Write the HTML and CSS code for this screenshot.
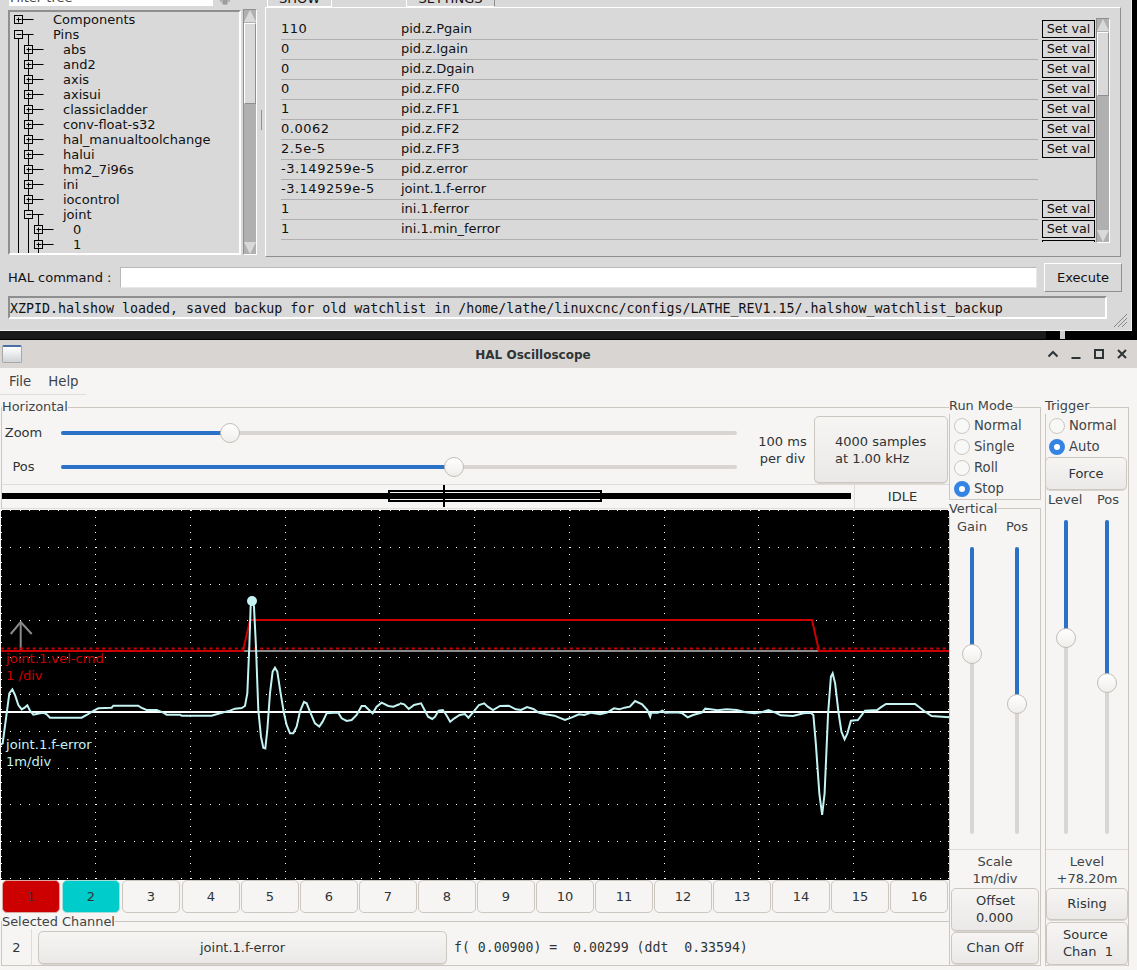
FILE: index.html
```html
<!DOCTYPE html>
<html lang="en">

<head>
    <meta charset="UTF-8">
    <title>HAL Oscilloscope</title>
    <link rel="stylesheet" href="styles.css">
</head>

<body>
    <section class="halshow">
        <div class="hs-top">
            <div class="hs-left">
                <div class="hs-filter">
                    <div class="hs-filter-entry">Filter tree</div>
                    <svg class="hs-filter-icon" width="10" height="6"><path d="M0 1h10M2 3h6M4 0v5M6 0v5" stroke="#8a8a8a" fill="none"/></svg>
                </div>
                <div class="hs-tree-wrap">
                    <div class="hs-tree">
                        <svg id="tree_lines" class="tree-lines" width="100" height="245"></svg>
                        <div class="tree-row tree-l0">Components</div>
                        <div class="tree-row tree-l0">Pins</div>
                        <div class="tree-row tree-l1">abs</div>
                        <div class="tree-row tree-l1">and2</div>
                        <div class="tree-row tree-l1">axis</div>
                        <div class="tree-row tree-l1">axisui</div>
                        <div class="tree-row tree-l1">classicladder</div>
                        <div class="tree-row tree-l1">conv-float-s32</div>
                        <div class="tree-row tree-l1">hal_manualtoolchange</div>
                        <div class="tree-row tree-l1">halui</div>
                        <div class="tree-row tree-l1">hm2_7i96s</div>
                        <div class="tree-row tree-l1">ini</div>
                        <div class="tree-row tree-l1">iocontrol</div>
                        <div class="tree-row tree-l1">joint</div>
                        <div class="tree-row tree-l2">0</div>
                        <div class="tree-row tree-l2">1</div>
                    </div>
                    <div class="tk-scroll tree-scroll">
                        <div class="tk-arrow-up"></div>
                        <div class="tk-thumb tree-thumb"></div>
                        <div class="tk-trough"></div>
                        <div class="tk-arrow-down"></div>
                    </div>
                </div>
            </div>
            <div class="hs-sash"></div>
            <div class="hs-right">
                <div class="hs-tabs">
                    <div class="hs-tab hs-tab-show">SHOW</div>
                    <div class="hs-tab hs-tab-watch"></div>
                    <div class="hs-tab hs-tab-settings">SETTINGS</div>
                </div>
                <div class="hs-panel">
                    <div class="watch-list">
                        <div class="watch-row"><span class="watch-val">110</span><span class="watch-name">pid.z.Pgain</span><button class="setval">Set val</button></div>
                        <div class="watch-row"><span class="watch-val">0</span><span class="watch-name">pid.z.Igain</span><button class="setval">Set val</button></div>
                        <div class="watch-row"><span class="watch-val">0</span><span class="watch-name">pid.z.Dgain</span><button class="setval">Set val</button></div>
                        <div class="watch-row"><span class="watch-val">0</span><span class="watch-name">pid.z.FF0</span><button class="setval">Set val</button></div>
                        <div class="watch-row"><span class="watch-val">1</span><span class="watch-name">pid.z.FF1</span><button class="setval">Set val</button></div>
                        <div class="watch-row"><span class="watch-val">0.0062</span><span class="watch-name">pid.z.FF2</span><button class="setval">Set val</button></div>
                        <div class="watch-row"><span class="watch-val">2.5e-5</span><span class="watch-name">pid.z.FF3</span><button class="setval">Set val</button></div>
                        <div class="watch-row"><span class="watch-val">-3.149259e-5</span><span class="watch-name">pid.z.error</span></div>
                        <div class="watch-row"><span class="watch-val">-3.149259e-5</span><span class="watch-name">joint.1.f-error</span></div>
                        <div class="watch-row"><span class="watch-val">1</span><span class="watch-name">ini.1.ferror</span><button class="setval">Set val</button></div>
                        <div class="watch-row"><span class="watch-val">1</span><span class="watch-name">ini.1.min_ferror</span><button class="setval">Set val</button></div>
                        <div class="watch-cut"></div>
                    </div>
                    <div class="tk-scroll watch-scroll">
                        <div class="tk-arrow-up"></div>
                        <div class="tk-thumb watch-thumb"></div>
                        <div class="tk-trough"></div>
                        <div class="tk-arrow-down"></div>
                    </div>
                </div>
            </div>
        </div>
        <div class="hs-command">
            <label class="hs-label">HAL command :</label>
            <div class="hs-entry"></div>
            <button class="hs-execute">Execute</button>
        </div>
        <div class="hs-status">XZPID.halshow loaded, saved backup for old watchlist in /home/lathe/linuxcnc/configs/LATHE_REV1.15/.halshow_watchlist_backup</div>
        <svg class="hs-grip" width="14" height="14"><path d="M1 14L14 1M5 14L14 5M9 14L14 9" stroke="#8a8a8a" fill="none"/></svg>
    </section>
    <div class="desktop-gap">
        <div class="gap-dark"></div>
        <div class="gap-mark"></div>
    </div>

    <section class="scope">
        <header class="titlebar">
            <div class="app-icon"></div>
            <div class="title-text">HAL Oscilloscope</div>
            <div class="win-buttons">
                <svg width="14" height="14" viewBox="0 0 14 14"><path d="M2.500 9.500L7 5l4.500 4.500" fill="none" stroke="#2e3436" stroke-width="2"/></svg>
                <svg width="14" height="14" viewBox="0 0 14 14"><path d="M2.500 11h9" fill="none" stroke="#2e3436" stroke-width="2"/></svg>
                <svg width="14" height="14" viewBox="0 0 14 14"><rect x="3" y="3" width="8" height="8" fill="none" stroke="#2e3436" stroke-width="2"/></svg>
                <svg width="14" height="14" viewBox="0 0 14 14"><path d="M3 3l8 8M11 3l-8 8" fill="none" stroke="#2e3436" stroke-width="2"/></svg>
            </div>
        </header>

        <nav class="menubar"><span class="menu-item">File</span><span class="menu-item">Help</span></nav>

        <div class="scope-body">
            <div class="scope-main">
                <fieldset class="gframe horizontal">
                    <legend>Horizontal</legend>
                    <div class="horiz-top">
                        <div class="horiz-sliders">
                            <div class="hslider-row">
                                <span class="hslider-label">Zoom</span>
                                <div class="hslider">
                                    <div class="hslider-fill fill-zoom"></div>
                                    <div class="knob knob-zoom"></div>
                                </div>
                            </div>
                            <div class="hslider-row">
                                <span class="hslider-label">Pos</span>
                                <div class="hslider">
                                    <div class="hslider-fill fill-pos"></div>
                                    <div class="knob knob-pos"></div>
                                </div>
                            </div>
                        </div>
                        <div class="perdiv">100 ms<br>per div</div>
                        <button class="gbtn samples-btn">4000 samples<br>at 1.00 kHz</button>
                    </div>
                    <div class="horiz-bottom">
                        <div class="record-bar">
                            <div class="record-line"></div>
                            <div class="record-box"></div>
                            <div class="record-tick"></div>
                        </div>
                        <div class="idle">IDLE</div>
                    </div>
                </fieldset>

                <!-- viewBox uses window coordinates so the traces read straight off the screen -->
                <svg class="scope-canvas" width="948" height="370" viewBox="1 510 948 370">
                    <g id="grid" fill="#fff" shape-rendering="crispEdges"></g>
                    <path d="M20.700 622V650" stroke="#8a8a8a" stroke-width="2" fill="none"/>
                    <path d="M10.700 634L20.700 622L31.700 634" stroke="#8a8a8a" stroke-width="2" fill="none"/>
                    <path d="M1 648.500H949" stroke="#cc0000" stroke-width="2" stroke-dasharray="3 3.320" fill="none"/>
                    <path d="M244 651H819" stroke="#8a8a8a" stroke-width="2" fill="none"/>
                    <path d="M1 651H243L250 620H812L819 651H949" stroke="#cc0000" stroke-width="2" fill="none"/>
                    <path d="M1 712H949" stroke="#fff" stroke-width="2" fill="none"/>
                    <path class="trace" transform="translate(0 580) scale(.3333)" d="M0 495L8 490L20 400L28 340L37 328L45 345L55 375L65 388L75 382L82 376L90 392L100 404L110 402L120 400L130 398L140 403L150 413L245 413L260 405L280 393L295 385L335 383L340 377L415 377L425 384L440 390L470 390L490 398L500 404L540 404L545 407L635 407L660 400L690 392L705 386L725 384L735 378L742 340L748 200L752 80L757 55L762 80L768 200L775 390L783 470L790 503L796 505L802 450L810 340L818 275L825 263L832 275L842 340L852 400L860 435L870 460L880 460L890 440L900 395L912 366L920 370L930 395L945 430L958 440L968 425L980 400L1000 398L1015 398L1025 415L1040 423L1055 420L1070 405L1085 378L1095 378L1105 388L1118 400L1130 380L1145 368L1165 378L1180 380L1200 372"/>
                    <path class="trace" transform="translate(400 670) scale(.3509 .3333)" d="M0 100L12 103L25 117L40 105L60 100L70 120L80 140L92 147L100 140L110 122L122 120L132 135L143 155L155 145L170 135L185 132L195 143L210 125L225 105L240 100L250 110L265 120L285 108L310 107L330 118L345 120L362 111L380 117L395 128L415 133L440 137L470 150L490 142L510 133L525 135L545 128L570 133L590 128L610 115L625 118L640 113L655 110L670 93L690 103L705 120L713 140L716 128L735 128L748 122L755 128L790 127L805 130L820 142L835 135L860 128L870 116L885 118L905 121L930 118L960 120L985 127L1010 130L1030 127L1050 120L1070 128L1085 136L1120 138L1150 130L1170 128L1178 135L1185 220L1195 370L1203 435L1210 370L1220 130L1228 20L1233 10L1240 40L1250 130L1258 185L1267 208L1275 190L1285 152L1305 150L1325 122L1360 120L1370 112L1385 102L1468 102L1490 120L1515 138L1565 142"/>
                    <circle cx="252" cy="601" r="5" fill="#c4f3f4"/>
                    <text class="trace-label label-red" x="6" y="663">joint.1.vel-cmd</text>
                    <text class="trace-label label-red" x="6" y="680">1 /div</text>
                    <text class="trace-label label-cyan" x="6" y="749">joint.1.f-error</text>
                    <text class="trace-label label-cyan" x="6" y="766">1m/div</text>
                </svg>

                <div class="channels">
                    <button class="chan chan-red">1</button>
                    <button class="chan chan-cyan">2</button>
                    <button class="chan">3</button>
                    <button class="chan">4</button>
                    <button class="chan">5</button>
                    <button class="chan">6</button>
                    <button class="chan">7</button>
                    <button class="chan">8</button>
                    <button class="chan">9</button>
                    <button class="chan">10</button>
                    <button class="chan">11</button>
                    <button class="chan">12</button>
                    <button class="chan">13</button>
                    <button class="chan">14</button>
                    <button class="chan">15</button>
                    <button class="chan">16</button>
                </div>

                <fieldset class="gframe selected">
                    <legend>Selected Channel</legend>
                    <div class="sel-row">
                        <div class="sel-num">2</div>
                        <button class="gbtn sel-name">joint.1.f-error</button>
                        <div class="sel-readout">f( 0.00900) =  0.00299 (ddt  0.33594)</div>
                    </div>
                </fieldset>
            </div>

            <div class="scope-mid">
                <fieldset class="gframe runmode">
                    <legend>Run Mode</legend>
                    <div class="radio"><span class="radio-dot"></span>Normal</div>
                    <div class="radio"><span class="radio-dot"></span>Single</div>
                    <div class="radio"><span class="radio-dot"></span>Roll</div>
                    <div class="radio"><span class="radio-dot radio-on"></span>Stop</div>
                </fieldset>
                <fieldset class="gframe vertical">
                    <legend>Vertical</legend>
                    <div class="vhead"><span>Gain</span><span>Pos</span></div>
                    <div class="vsliders vsliders-mid">
                        <div class="vslider"><div class="vslider-fill vfill-gain"></div><div class="knob knob-gain"></div></div>
                        <div class="vslider"><div class="vslider-fill vfill-vpos"></div><div class="knob knob-vpos"></div></div>
                    </div>
                    <div class="side-foot">Scale<br>1m/div</div>
                    <button class="gbtn side-btn side-btn-tall side-btn-offset">Offset<br>0.000</button>
                    <button class="gbtn side-btn side-btn-off">Chan Off</button>
                </fieldset>
            </div>

            <fieldset class="gframe trigger">
                <legend>Trigger</legend>
                <div class="radio"><span class="radio-dot"></span>Normal</div>
                <div class="radio"><span class="radio-dot radio-on"></span>Auto</div>
                <button class="gbtn force-btn">Force</button>
                <div class="vhead vhead-trig"><span>Level</span><span>Pos</span></div>
                <div class="vsliders vsliders-trig">
                    <div class="vslider"><div class="vslider-fill vfill-level"></div><div class="knob knob-level"></div></div>
                    <div class="vslider"><div class="vslider-fill vfill-tpos"></div><div class="knob knob-tpos"></div></div>
                </div>
                <div class="side-foot">Level<br>+78.20m</div>
                <button class="gbtn side-btn">Rising</button>
                <button class="gbtn side-btn side-btn-tall side-btn-source">Source<br>Chan&nbsp; 1</button>
            </fieldset>
        </div>
    </section>

    <script>
        // grid dots on the scope
        let dots = "";
        function dot(x, y) {
            dots += '<rect x="' + x + '" y="' + y + '" width="1" height="1"/>';
        }
        for (let k = 0; k <= 10; k++) {
            let x = Math.max(1, Math.round(0.3 + 94.75 * k));
            for (let y = 510; y <= 879; y += 7.36) {
                dot(x, Math.round(y));
            }
        }
        for (let y = 510; y <= 879; y += 36.8) {
            for (let x = 1; x <= 949; x += 9.48) {
                dot(Math.round(x), Math.round(y));
            }
        }
        document.querySelector("#grid").innerHTML = dots;

        // tree lines and +/- boxes: [row, centre x of box, open]
        let nodes = [[0, 8.5, false], [1, 8.5, true]];
        for (let r = 2; r <= 13; r++) {
            nodes.push([r, 18.5, r == 13]);
        }
        nodes.push([14, 28.5, false]);
        nodes.push([15, 28.5, false]);

        let lines = "M8.5 22.5V245M18.5 22.5V245M28.5 202.5V245";
        let boxes = "";
        let signs = "";
        for (let n of nodes) {
            let c = 7.5 + 15 * n[0];
            lines += "M" + n[1] + " " + c + "H" + (n[1] + 15);
            boxes += '<rect x="' + (n[1] - 4) + '" y="' + (c - 4) + '" width="8" height="8"/>';
            signs += "M" + (n[1] - 2) + " " + c + "h5";
            if (!n[2]) {
                signs += "M" + n[1] + " " + (c - 2) + "v5";
            }
        }
        document.querySelector("#tree_lines").innerHTML =
            '<path d="' + lines + '" fill="none" stroke="#000"/>' +
            '<g fill="#d9d9d9" stroke="#000">' + boxes + '</g>' +
            '<path d="' + signs + '" fill="none" stroke="#000"/>';
    </script>
</body>

</html>
```

FILE: styles.css
```css
html, body {
    margin: 0;
    padding: 0;
    background: #000;
    overflow: hidden;
}

body {
    width: 1137px;
    height: 970px;
    font-family: "DejaVu Sans", sans-serif;
    font-size: 13px;
    color: #2e3436;
}

button {
    font-family: inherit;
    margin: 0;
}

/* halshow window */
.halshow {
    position: relative;
    width: 1132px;
    height: 331px;
    box-sizing: border-box;
    background: #d9d9d9;
    border-right: 1px solid #f0f0f0;
    border-bottom: 1px solid #f0f0f0;
    color: #111;
    font-size: 13px;
}

.hs-top {
    display: flex;
    height: 257px;
}

.hs-left {
    width: 259px;
    flex: none;
}

.hs-filter {
    display: flex;
    height: 9px;
    padding-left: 9px;
    overflow: hidden;
}

.hs-filter-entry {
    display: flex;
    align-items: flex-end;
    width: 204px;
    height: 6px;
    box-sizing: border-box;
    padding: 0 0 3px 1px;
    background: #fff;
    font-size: 13px;
    line-height: 10px;
    color: #444;
}

.hs-filter-icon {
    margin-left: 7px;
}

.hs-tree-wrap {
    display: flex;
    margin-left: 8px;
    gap: 2px;
    height: 246px;
}

.hs-tree {
    position: relative;
    width: 233px;
    height: 245px;
    margin-top: 1px;
    box-sizing: border-box;
    border: 2px solid #8f8f8f;
    border-right-color: #fff;
    border-bottom-color: #fff;
    overflow: hidden;
}

.tree-lines {
    position: absolute;
    left: 0;
    top: 0;
}

.tree-row {
    height: 15px;
    line-height: 15px;
    white-space: nowrap;
    position: relative;
}

.tree-l0 { padding-left: 43px; }
.tree-l1 { padding-left: 53px; }
.tree-l2 { padding-left: 63px; }

.tk-scroll {
    display: flex;
    flex-direction: column;
    width: 14px;
    background: #b0b0b0;
    box-sizing: border-box;
    border: 1px solid;
    border-color: #8f8f8f #fff #fff #8f8f8f;
}

.tk-arrow-up, .tk-arrow-down {
    height: 12px;
    flex: none;
    background: #d9d9d9;
}

.tk-arrow-up { clip-path: polygon(50% 0, 100% 100%, 0 100%); }
.tk-arrow-down { clip-path: polygon(0 0, 100% 0, 50% 100%); }

.tk-thumb {
    flex: none;
    background: #d9d9d9;
    border: 1px solid;
    border-color: #fff #8f8f8f #8f8f8f #fff;
    box-sizing: border-box;
    margin-top: 1px;
}

.tk-trough { flex: 1; }

.tree-scroll { height: 246px; }
.tree-thumb { height: 81px; }

.hs-sash {
    width: 1px;
    height: 20px;
    margin: 110px 3px 0 2px;
    flex: none;
    background: #8f8f8f;
}

.hs-right {
    flex: 1;
    margin-right: 10px;
}

.hs-tabs {
    display: flex;
    height: 7px;
    padding-left: 2px;
    overflow: hidden;
}

.hs-tab {
    display: flex;
    align-items: flex-end;
    justify-content: center;
    height: 7px;
    box-sizing: border-box;
    padding-bottom: 2px;
    font-size: 13px;
    line-height: 10px;
    border: solid #fff;
    border-width: 0 1px 1px 1px;
}

.hs-tab-show { width: 65px; }
.hs-tab-watch { width: 74px; border: none; }
.hs-tab-settings { width: 89px; border-right-color: #8f8f8f; }

.hs-panel {
    display: flex;
    height: 250px;
    box-sizing: border-box;
    border: 1px solid;
    border-color: #fff #8f8f8f #8f8f8f #fff;
    padding: 12px 10px 0 15px;
}

.watch-list {
    width: 815px;
    height: 222px;
    overflow: hidden;
}

.watch-row {
    display: flex;
    height: 20px;
    box-sizing: border-box;
    padding-bottom: 3px;
    align-items: center;
    position: relative;
}

.watch-row::after {
    content: "";
    position: absolute;
    left: 0;
    width: 757px;
    bottom: 0;
    height: 1px;
    background: #afafaf;
}

.watch-val {
    width: 120px;
    flex: none;
    letter-spacing: 0.5px;
}

.watch-name {
    flex: 1;
}

.setval {
    position: absolute;
    left: 761px;
    top: 0;
    width: 53px;
    height: 18px;
    box-sizing: border-box;
    border: 1px solid #000;
    outline: none;
    background: #d9d9d9;
    color: #111;
    font-size: 12.700px;
    padding: 0;
    line-height: 14px;
}

.watch-cut {
    margin-left: 761px;
    width: 53px;
    height: 2px;
    border: 1px solid #000;
    border-bottom: none;
    box-sizing: border-box;
}

.watch-scroll {
    height: 225px;
    margin-top: -2px;
}

.watch-thumb { height: 64px; }

.hs-command {
    display: flex;
    align-items: center;
    height: 36px;
    margin-top: 2px;
}

.hs-label {
    width: 112px;
    padding-left: 8px;
    flex: none;
}

.hs-entry {
    width: 917px;
    height: 21px;
    background: #fff;
    box-sizing: border-box;
    border: 1px solid;
    border-color: #b8b8b8 #e8e8e8 #e8e8e8 #b8b8b8;
    flex: none;
}

.hs-execute {
    width: 78px;
    height: 29px;
    margin-left: 7px;
    padding: 0;
    box-sizing: border-box;
    background: #d9d9d9;
    color: #111;
    font-size: 13px;
    border: 1px solid;
    border-color: #fff #8f8f8f #8f8f8f #fff;
}

.hs-status {
    width: 1099px;
    height: 23px;
    margin-left: 8px;
    margin-top: 1px;
    box-sizing: border-box;
    border: 2px solid #8f8f8f;
    border-right-color: #fff;
    border-bottom-color: #fff;
    padding-top: 1px;
    font-family: "DejaVu Sans Mono", monospace;
    font-size: 13.310px;
    line-height: 19px;
    white-space: nowrap;
}

.hs-grip {
    position: absolute;
    right: 4px;
    bottom: 3px;
}

.desktop-gap {
    display: flex;
    height: 9px;
    width: 1137px;
    background: #000;
}

.gap-dark {
    width: 1046px;
    height: 8px;
    background: #1a1a1a;
}

.gap-mark {
    width: 5px;
    height: 8px;
    margin-left: 14px;
    background: #cfcfcf;
}

/* scope window */
.scope {
    width: 1137px;
    height: 630px;
    background: #f6f5f4;
    font-size: 13px;
}

.titlebar {
    display: flex;
    align-items: center;
    justify-content: space-between;
    position: relative;
    height: 28px;
    background: #d8d5d2;
    padding: 0 8px 0 2px;
}

.app-icon {
    width: 20px;
    height: 18px;
    box-sizing: border-box;
    border: 1px solid #a8a8a8;
    border-top: 2px solid #4a6ea8;
    border-radius: 2px;
    background: linear-gradient(#fff, #cfd4d8);
}

.title-text {
    position: absolute;
    left: 0;
    right: 71px;
    padding-top: 1px;
    text-align: center;
    font-weight: bold;
    font-size: 12px;
    color: #2e3436;
}

.win-buttons {
    display: flex;
    gap: 9px;
    position: relative;
}

.menubar {
    display: flex;
    width: 86px;
    height: 27px;
    align-items: center;
    box-sizing: border-box;
    border-bottom: 1px solid #e0ddda;
    padding: 1px 0 0 9px;
    gap: 17px;
    font-size: 13.300px;
    color: #3d4447;
}

.scope-body {
    display: flex;
    height: 575px;
}

.scope-main {
    width: 949px;
    flex: none;
}

.gframe {
    margin: 0;
    padding: 0;
    min-width: 0;
    border: 1px solid #cdc7c2;
    box-sizing: border-box;
}

.gframe legend {
    padding: 0;
    font-size: 12.900px;
    line-height: 13px;
    color: #3d4447;
}

.horizontal {
    height: 108px;
    margin: 6px 0 0 1px;
    border-right: none;
    border-bottom: none;
}

.horizontal legend {
    line-height: 11px;
    padding-bottom: 2px;
}

.horiz-top {
    display: flex;
    height: 71px;
    border-bottom: 1px solid #dedbd8;
    box-sizing: border-box;
}

.horiz-sliders {
    width: 736px;
    padding-top: 2px;
    flex: none;
}

.hslider-row {
    display: flex;
    align-items: center;
    height: 34px;
}

.hslider-label {
    width: 58px;
    text-align: center;
    flex: none;
    margin-right: 1px;
    padding: 0 15px 2px 0;
    box-sizing: border-box;
}

.hslider {
    position: relative;
    width: 676px;
    height: 4px;
    background: #d8d5d2;
    border-radius: 2px;
}

.hslider-fill {
    height: 4px;
    background: #2a72c8;
    border-radius: 2px;
}

.fill-zoom { width: 169px; }
.fill-pos { width: 393px; }

.knob {
    position: absolute;
    width: 20px;
    height: 20px;
    box-sizing: border-box;
    border: 1px solid #c2bcb6;
    border-radius: 50%;
    background: linear-gradient(#fff, #f0eeec);
}

.knob-zoom { left: 159px; top: -8px; }
.knob-pos { left: 383px; top: -8px; }

.perdiv {
    width: 76px;
    flex: none;
    text-align: center;
    line-height: 17px;
    padding: 19px 0 0 13px;
    box-sizing: border-box;
}

.gbtn {
    border: 1px solid #cdc7c2;
    border-radius: 5px;
    background: linear-gradient(#f6f5f4, #ebe9e7);
    color: #2e3436;
    font-size: 13px;
    padding: 0;
    line-height: 17px;
    box-shadow: 0 1px 0 #d8d4d0;
}

.samples-btn {
    width: 134px;
    height: 67px;
    margin-top: 2px;
    padding-left: 20px;
    text-align: left;
    flex: none;
}

.horiz-bottom {
    display: flex;
    height: 24px;
    align-items: center;
    border-bottom: 1px solid #dedbd8;
    box-sizing: border-box;
}

.record-bar {
    position: relative;
    width: 853px;
    height: 24px;
    flex: none;
    border-right: 1px solid #dedbd8;
    box-sizing: border-box;
}

.record-line {
    position: absolute;
    left: 0;
    top: 8px;
    width: 849px;
    height: 6px;
    background: #000;
}

.record-box {
    position: absolute;
    left: 386px;
    top: 5px;
    width: 214px;
    height: 12px;
    box-sizing: border-box;
    border: 2px solid #000;
    background: linear-gradient(#f6f5f4 1px, #000 1px, #000 7px, #f6f5f4 7px);
}

.record-tick {
    position: absolute;
    left: 441px;
    top: 0;
    width: 2px;
    height: 22px;
    background: #000;
}

.idle {
    flex: 1;
    text-align: center;
    padding-left: 1px;
}

.scope-canvas {
    display: block;
    background: #000;
    margin: 1px 0 0 1px;
}

.trace {
    fill: none;
    stroke: #c4f3f4;
    stroke-width: 2px;
    vector-effect: non-scaling-stroke;
}

.trace-label {
    font-family: "DejaVu Sans", sans-serif;
    font-size: 13.100px;
}

.label-red { fill: #cc0000; }
.label-cyan { fill: #c4f3f4; }

.channels {
    display: flex;
    height: 33px;
    padding-left: 2px;
    box-sizing: border-box;
}

.chan {
    width: 58px;
    flex: none;
    margin-right: 1px;
    border: 1px solid #cdc7c2;
    border-radius: 5px;
    background: #f6f5f4;
    color: #2e3436;
    font-size: 13px;
    padding: 0;
}

.chan:nth-child(-n+3) { margin-right: 2px; }

.chan-red { background: #cc0000; border-color: #d9a8a0; }
.chan-cyan { background: #00cccc; border-color: #a8dcd8; }

.selected {
    height: 51px;
    margin: 2px 0 0 1px;
    border-right: none;
}

.sel-row {
    display: flex;
    align-items: center;
    height: 38px;
}

.sel-num {
    width: 30px;
    height: 37px;
    flex: none;
    display: flex;
    align-items: center;
    justify-content: center;
    border-right: 1px solid #dedbd8;
    box-sizing: border-box;
}

.sel-name {
    width: 409px;
    height: 33px;
    margin-left: 6px;
    flex: none;
}

.sel-readout {
    margin-left: 7px;
    font-family: "DejaVu Sans Mono", monospace;
    font-size: 13.200px;
    white-space: pre;
}

.scope-mid {
    width: 92px;
    flex: none;
    display: flex;
    flex-direction: column;
    padding-top: 6px;
}

.runmode {
    height: 99px;
}

.runmode legend, .vertical legend, .trigger legend {
    margin-left: -1px;
}

.runmode legend, .trigger legend {
    line-height: 9px;
    padding-bottom: 4px;
}

.runmode .radio:first-of-type, .trigger .radio:first-of-type {
    margin-top: 1px;
}

.radio {
    display: flex;
    align-items: center;
    height: 21px;
    padding-left: 4px;
    gap: 4px;
    font-size: 13.200px;
    color: #3d4447;
}

.trigger .radio {
    padding-left: 3px;
}

.radio-dot {
    width: 16px;
    height: 16px;
    box-sizing: border-box;
    border: 1px solid #cdc7c2;
    border-radius: 50%;
    background: #f8f8f7;
}

.radio-on {
    border: 5px solid #3584e4;
    background: #fff;
}

.vertical {
    height: 464px;
    margin-top: 2px;
    display: flex;
    flex-direction: column;
}

.vhead {
    display: flex;
    justify-content: space-between;
    padding: 4px 12px 0 7px;
    line-height: 15px;
    color: #3d4447;
}

.vsliders {
    display: flex;
    position: relative;
    border-bottom: 1px solid #dedbd8;
    box-sizing: border-box;
    flex: none;
}

.vsliders-mid {
    height: 316px;
    padding: 13px 0 0 20px;
    gap: 41px;
}

.vsliders-trig {
    height: 343px;
    padding: 13px 0 0 18px;
    gap: 37px;
}

.vslider {
    position: relative;
    width: 4px;
    height: 287px;
    background: #d8d5d2;
    border-radius: 2px;
}

.vsliders-trig .vslider { height: 314px; }

.vslider-fill {
    width: 4px;
    background: #2a72c8;
    border-radius: 2px;
}

.vfill-gain { height: 107px; }
.vfill-vpos { height: 157px; }
.vfill-level { height: 118px; }
.vfill-tpos { height: 163px; }

.knob-gain { left: -8px; top: 97px; }
.knob-vpos { left: -8px; top: 147px; }
.knob-level { left: -8px; top: 108px; }
.knob-tpos { left: -8px; top: 153px; }

.side-foot {
    text-align: center;
    line-height: 17px;
    height: 38px;
    box-sizing: border-box;
    padding-top: 3px;
    color: #3d4447;
    flex: none;
}

.side-btn {
    display: block;
    height: 32px;
    padding-bottom: 2px;
    flex: none;
    box-sizing: border-box;
}

.vertical .side-btn {
    width: 88px;
    margin-left: 1px;
}

.side-btn-tall { height: 43px; }

.side-btn-offset {
    padding-left: 24px;
    text-align: left;
}

.side-btn-off { margin-top: 1px; }

.side-btn-source {
    margin-top: 2px;
    padding-left: 16px;
    text-align: left;
}

.trigger {
    width: 84px;
    height: 565px;
    margin: 6px 0 0 4px;
    flex: none;
    display: flex;
    flex-direction: column;
    position: relative;
}

.trigger .side-btn { width: 82px; }

.force-btn {
    width: 82px;
    height: 33px;
    flex: none;
    margin-left: -1px;
}

.vhead-trig {
    padding: 2px 9px 0 2px;
}
```
